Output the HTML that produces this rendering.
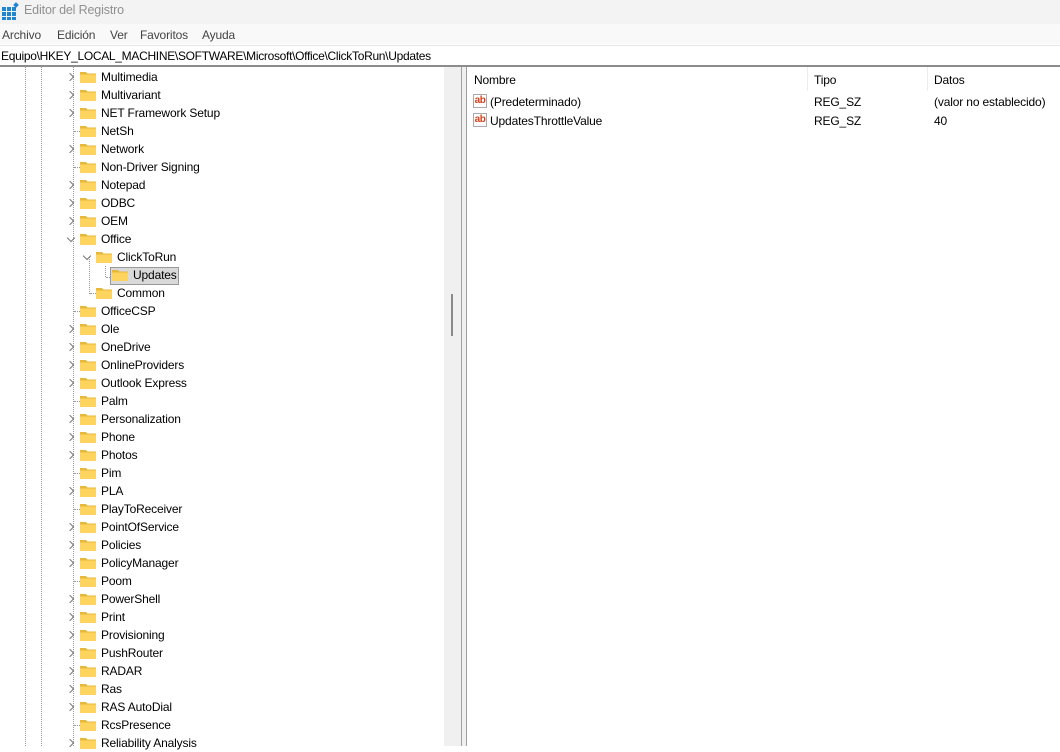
<!DOCTYPE html>
<html><head><meta charset="utf-8"><style>
*{margin:0;padding:0;box-sizing:border-box}
body{width:1060px;height:746px;overflow:hidden;background:#fff;font-family:"Liberation Sans",sans-serif;font-size:12px;color:#000;position:relative;letter-spacing:-0.15px}
.title{position:absolute;left:0;top:0;width:1060px;height:24px;background:#f3f3f3;color:#909090;font-size:12.5px}
.title span{position:absolute;left:24px;top:3px}
.menu{position:absolute;left:0;top:24px;width:1060px;height:20px;background:#f9f9f9;color:#444}
.menu span{position:absolute;top:4px}
.addr{position:absolute;left:0;top:45px;width:1060px;height:20px;background:#fff;border-top:1px solid #e6e6e6}
.addr span{position:absolute;left:1px;top:3px;letter-spacing:-0.3px}
.topline{position:absolute;left:0;top:65px;width:1060px;height:2px;background:#8c8c8c}
.vdot{position:absolute;width:1px;border-left:1px dotted #999}
.row{position:absolute;height:18px;line-height:18px;white-space:nowrap;margin-top:1px}
.chev{position:absolute;width:6px;height:6px;border-right:1.3px solid #777;border-bottom:1.3px solid #777;margin-top:1px}
.r{transform:rotate(-45deg)}
.d{transform:rotate(45deg)}
.fold{position:absolute;width:16px;height:12px;margin-top:1px}
.hdot{position:absolute;height:1px;border-top:1px dotted #999;margin-top:1px}
.sb{position:absolute;left:444px;top:67px;width:17px;height:679px;background:#f0f0f0}
.thumb{position:absolute;left:451px;top:294px;width:2px;height:42px;background:#8a8a8a}
.split{position:absolute;left:461px;top:67px;width:6px;height:679px;background:#f0f0f0;border-left:1px solid #a0a0a0;border-right:1px solid #a0a0a0}
.hd{position:absolute;top:73px}
.hsep{position:absolute;top:67px;width:1px;height:24px;background:#ececec}
.ab{position:absolute;width:14px;height:14px;border:1px solid #aaa;background:#fff;color:#d5401c;font-weight:bold;font-size:10px;line-height:11px;text-align:center;letter-spacing:-0.5px}
.cell{position:absolute}
</style></head><body>
<div class="title">
<svg style="position:absolute;left:2px;top:2px" width="18" height="18"><g fill="#1f86d0"><rect x="0" y="5" width="4" height="4"/><rect x="5" y="5" width="4" height="4"/><rect x="10" y="5" width="4" height="4"/><rect x="0" y="10" width="4" height="4"/><rect x="5" y="10" width="4" height="4"/><rect x="10" y="10" width="4" height="4"/><rect x="0" y="15" width="4" height="3"/><rect x="5" y="15" width="4" height="3"/><rect x="10" y="15" width="4" height="3"/><rect x="12" y="1" width="4" height="4" transform="rotate(45 14 3)"/></g></svg>
<span>Editor del Registro</span></div>
<div class="menu"><span style="left:2px">Archivo</span><span style="left:57px">Edición</span><span style="left:110px">Ver</span><span style="left:140px">Favoritos</span><span style="left:202px">Ayuda</span></div>
<div class="addr"><span>Equipo\HKEY_LOCAL_MACHINE\SOFTWARE\Microsoft\Office\ClickToRun\Updates</span></div>
<div class="topline"></div>

<div class="vdot" style="left:25px;top:67px;height:679px"></div>
<div class="vdot" style="left:41px;top:67px;height:679px"></div>
<div class="vdot" style="left:73px;top:67px;height:679px"></div>
<div class="vdot" style="left:89px;top:257px;height:37px"></div>
<div class="vdot" style="left:105px;top:266px;height:11px"></div>

<div class="sb"></div><div class="thumb"></div>
<div class="split"></div>

<div class="hd" style="left:474px">Nombre</div>
<div class="hsep" style="left:807px"></div>
<div class="hd" style="left:814px">Tipo</div>
<div class="hsep" style="left:927px"></div>
<div class="hd" style="left:934px">Datos</div>
<div class="ab" style="left:473px;top:94px">ab</div>
<div class="cell" style="left:490px;top:95px">(Predeterminado)</div>
<div class="cell" style="left:814px;top:95px">REG_SZ</div>
<div class="cell" style="left:934px;top:95px">(valor no establecido)</div>
<div class="ab" style="left:473px;top:113px">ab</div>
<div class="cell" style="left:490px;top:114px">UpdatesThrottleValue</div>
<div class="cell" style="left:814px;top:114px">REG_SZ</div>
<div class="cell" style="left:934px;top:114px">40</div>

<svg width="0" height="0" style="position:absolute"><defs><symbol id="f" viewBox="0 0 16 12"><path d="M0 1h6l1.5 1.5H16V12H0z" fill="#e8b83a"/><path d="M0 3.5h16V12H0z" fill="#ffd45e"/></symbol></defs></svg>

<div class="chev r" style="left:67px;top:73px"></div><svg class="fold" style="left:80px;top:70px"><use href="#f"/></svg><div class="row" style="left:101px;top:67px">Multimedia</div>
<div class="chev r" style="left:67px;top:91px"></div><svg class="fold" style="left:80px;top:88px"><use href="#f"/></svg><div class="row" style="left:101px;top:85px">Multivariant</div>
<div class="chev r" style="left:67px;top:109px"></div><svg class="fold" style="left:80px;top:106px"><use href="#f"/></svg><div class="row" style="left:101px;top:103px">NET Framework Setup</div>
<div class="hdot" style="left:74px;top:130px;width:6px"></div><svg class="fold" style="left:80px;top:124px"><use href="#f"/></svg><div class="row" style="left:101px;top:121px">NetSh</div>
<div class="chev r" style="left:67px;top:145px"></div><svg class="fold" style="left:80px;top:142px"><use href="#f"/></svg><div class="row" style="left:101px;top:139px">Network</div>
<div class="hdot" style="left:74px;top:166px;width:6px"></div><svg class="fold" style="left:80px;top:160px"><use href="#f"/></svg><div class="row" style="left:101px;top:157px">Non-Driver Signing</div>
<div class="chev r" style="left:67px;top:181px"></div><svg class="fold" style="left:80px;top:178px"><use href="#f"/></svg><div class="row" style="left:101px;top:175px">Notepad</div>
<div class="chev r" style="left:67px;top:199px"></div><svg class="fold" style="left:80px;top:196px"><use href="#f"/></svg><div class="row" style="left:101px;top:193px">ODBC</div>
<div class="chev r" style="left:67px;top:217px"></div><svg class="fold" style="left:80px;top:214px"><use href="#f"/></svg><div class="row" style="left:101px;top:211px">OEM</div>
<div class="chev d" style="left:68px;top:234px"></div><svg class="fold" style="left:80px;top:232px"><use href="#f"/></svg><div class="row" style="left:101px;top:229px">Office</div>
<div class="chev d" style="left:84px;top:252px"></div><svg class="fold" style="left:96px;top:250px"><use href="#f"/></svg><div class="row" style="left:117px;top:247px">ClickToRun</div>
<div class="hdot" style="left:106px;top:276px;width:6px"></div><div style="position:absolute;left:110px;top:267px;width:69px;height:18px;background:#d9d9d9;border:1px solid #999"></div><svg class="fold" style="left:112px;top:268px"><use href="#f"/></svg><div class="row" style="left:133px;top:265px">Updates</div>
<div class="hdot" style="left:90px;top:292px;width:6px"></div><svg class="fold" style="left:96px;top:286px"><use href="#f"/></svg><div class="row" style="left:117px;top:283px">Common</div>
<div class="hdot" style="left:74px;top:310px;width:6px"></div><svg class="fold" style="left:80px;top:304px"><use href="#f"/></svg><div class="row" style="left:101px;top:301px">OfficeCSP</div>
<div class="chev r" style="left:67px;top:325px"></div><svg class="fold" style="left:80px;top:322px"><use href="#f"/></svg><div class="row" style="left:101px;top:319px">Ole</div>
<div class="chev r" style="left:67px;top:343px"></div><svg class="fold" style="left:80px;top:340px"><use href="#f"/></svg><div class="row" style="left:101px;top:337px">OneDrive</div>
<div class="chev r" style="left:67px;top:361px"></div><svg class="fold" style="left:80px;top:358px"><use href="#f"/></svg><div class="row" style="left:101px;top:355px">OnlineProviders</div>
<div class="chev r" style="left:67px;top:379px"></div><svg class="fold" style="left:80px;top:376px"><use href="#f"/></svg><div class="row" style="left:101px;top:373px">Outlook Express</div>
<div class="hdot" style="left:74px;top:400px;width:6px"></div><svg class="fold" style="left:80px;top:394px"><use href="#f"/></svg><div class="row" style="left:101px;top:391px">Palm</div>
<div class="chev r" style="left:67px;top:415px"></div><svg class="fold" style="left:80px;top:412px"><use href="#f"/></svg><div class="row" style="left:101px;top:409px">Personalization</div>
<div class="chev r" style="left:67px;top:433px"></div><svg class="fold" style="left:80px;top:430px"><use href="#f"/></svg><div class="row" style="left:101px;top:427px">Phone</div>
<div class="chev r" style="left:67px;top:451px"></div><svg class="fold" style="left:80px;top:448px"><use href="#f"/></svg><div class="row" style="left:101px;top:445px">Photos</div>
<div class="hdot" style="left:74px;top:472px;width:6px"></div><svg class="fold" style="left:80px;top:466px"><use href="#f"/></svg><div class="row" style="left:101px;top:463px">Pim</div>
<div class="chev r" style="left:67px;top:487px"></div><svg class="fold" style="left:80px;top:484px"><use href="#f"/></svg><div class="row" style="left:101px;top:481px">PLA</div>
<div class="hdot" style="left:74px;top:508px;width:6px"></div><svg class="fold" style="left:80px;top:502px"><use href="#f"/></svg><div class="row" style="left:101px;top:499px">PlayToReceiver</div>
<div class="chev r" style="left:67px;top:523px"></div><svg class="fold" style="left:80px;top:520px"><use href="#f"/></svg><div class="row" style="left:101px;top:517px">PointOfService</div>
<div class="chev r" style="left:67px;top:541px"></div><svg class="fold" style="left:80px;top:538px"><use href="#f"/></svg><div class="row" style="left:101px;top:535px">Policies</div>
<div class="chev r" style="left:67px;top:559px"></div><svg class="fold" style="left:80px;top:556px"><use href="#f"/></svg><div class="row" style="left:101px;top:553px">PolicyManager</div>
<div class="hdot" style="left:74px;top:580px;width:6px"></div><svg class="fold" style="left:80px;top:574px"><use href="#f"/></svg><div class="row" style="left:101px;top:571px">Poom</div>
<div class="chev r" style="left:67px;top:595px"></div><svg class="fold" style="left:80px;top:592px"><use href="#f"/></svg><div class="row" style="left:101px;top:589px">PowerShell</div>
<div class="chev r" style="left:67px;top:613px"></div><svg class="fold" style="left:80px;top:610px"><use href="#f"/></svg><div class="row" style="left:101px;top:607px">Print</div>
<div class="chev r" style="left:67px;top:631px"></div><svg class="fold" style="left:80px;top:628px"><use href="#f"/></svg><div class="row" style="left:101px;top:625px">Provisioning</div>
<div class="chev r" style="left:67px;top:649px"></div><svg class="fold" style="left:80px;top:646px"><use href="#f"/></svg><div class="row" style="left:101px;top:643px">PushRouter</div>
<div class="chev r" style="left:67px;top:667px"></div><svg class="fold" style="left:80px;top:664px"><use href="#f"/></svg><div class="row" style="left:101px;top:661px">RADAR</div>
<div class="chev r" style="left:67px;top:685px"></div><svg class="fold" style="left:80px;top:682px"><use href="#f"/></svg><div class="row" style="left:101px;top:679px">Ras</div>
<div class="chev r" style="left:67px;top:703px"></div><svg class="fold" style="left:80px;top:700px"><use href="#f"/></svg><div class="row" style="left:101px;top:697px">RAS AutoDial</div>
<div class="hdot" style="left:74px;top:724px;width:6px"></div><svg class="fold" style="left:80px;top:718px"><use href="#f"/></svg><div class="row" style="left:101px;top:715px">RcsPresence</div>
<div class="chev r" style="left:67px;top:739px"></div><svg class="fold" style="left:80px;top:736px"><use href="#f"/></svg><div class="row" style="left:101px;top:733px">Reliability Analysis</div>
</body></html>
